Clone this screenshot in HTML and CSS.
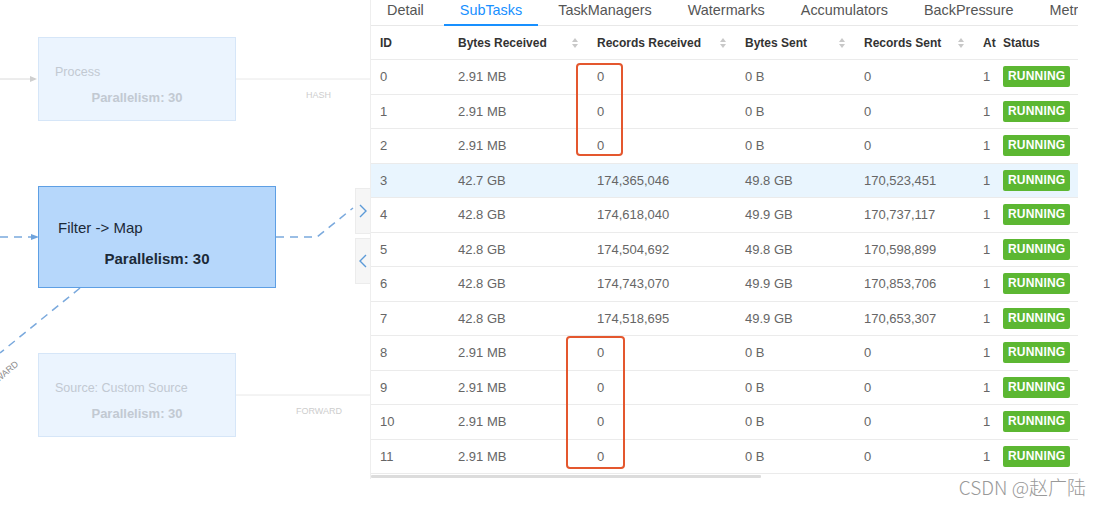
FILE: index.html
```html
<!DOCTYPE html>
<html>
<head>
<meta charset="utf-8">
<link rel="stylesheet" href="styles.css">
</head>
<body>
<div class="page">
  <div class="graph">
    <svg class="edges" width="370" height="505" viewBox="0 0 370 505">
      <line x1="0" y1="79" x2="30" y2="79" stroke="#dadada" stroke-width="1"/>
      <polygon points="30,76 37,79 30,82" fill="#cfcfcf"/>
      <line x1="236" y1="79" x2="370" y2="79" stroke="#e8e8e8" stroke-width="1"/>
      <text x="306" y="98" class="elabel">HASH</text>
      <line x1="0" y1="237" x2="31" y2="237" stroke="#7aa9dd" stroke-width="1.5" stroke-dasharray="8 6"/>
      <polygon points="31,234 39,237 31,240" fill="#6fa3dc"/>
      <path d="M276 237 L317 237 L353 208" fill="none" stroke="#7aa9dd" stroke-width="1.5" stroke-dasharray="8 6"/>
      <path d="M80 288 L0 353" fill="none" stroke="#7aa9dd" stroke-width="1.5" stroke-dasharray="8 6"/>
      <text x="19" y="365" class="elabel dark" text-anchor="end" transform="rotate(-40 19 365)">FORWARD</text>
      <line x1="236" y1="395" x2="370" y2="395" stroke="#e8e8e8" stroke-width="1"/>
      <text x="296" y="414" class="elabel">FORWARD</text>
    </svg>
    <div class="node faded n-process">
      <div class="ntitle">Process</div>
      <div class="npar">Parallelism: 30</div>
    </div>
    <div class="node active n-filter">
      <div class="ntitle">Filter -&gt; Map</div>
      <div class="npar">Parallelism: 30</div>
    </div>
    <div class="node faded n-source">
      <div class="ntitle">Source: Custom Source</div>
      <div class="npar">Parallelism: 30</div>
    </div>
    <div class="toggles">
      <div class="toggle"><svg width="8" height="14" viewBox="0 0 8 14"><path d="M1 1 L7 7 L1 13" fill="none" stroke="#5b9ad8" stroke-width="1.4"/></svg></div>
      <div class="toggle"><svg width="8" height="14" viewBox="0 0 8 14"><path d="M7 1 L1 7 L7 13" fill="none" stroke="#5b9ad8" stroke-width="1.4"/></svg></div>
    </div>
  </div>

  <div class="panel">
    <div class="tabs">
      <div class="tab">Detail</div>
      <div class="tab active">SubTasks</div>
      <div class="tab">TaskManagers</div>
      <div class="tab">Watermarks</div>
      <div class="tab">Accumulators</div>
      <div class="tab">BackPressure</div>
      <div class="tab">Metrics</div>
    </div>
    <div class="table">
      <div class="row head">
        <div class="c">ID</div>
        <div class="c sort">Bytes Received <span class="sorter"><i class="up"></i><i class="down"></i></span></div>
        <div class="c sort">Records Received <span class="sorter"><i class="up"></i><i class="down"></i></span></div>
        <div class="c sort">Bytes Sent <span class="sorter"><i class="up"></i><i class="down"></i></span></div>
        <div class="c sort">Records Sent <span class="sorter"><i class="up"></i><i class="down"></i></span></div>
        <div class="c">At</div>
        <div class="c">Status</div>
      </div>
      <div class="row"><div class="c">0</div><div class="c">2.91 MB</div><div class="c">0</div><div class="c">0 B</div><div class="c">0</div><div class="c">1</div><div class="c"><span class="badge">RUNNING</span></div></div>
      <div class="row"><div class="c">1</div><div class="c">2.91 MB</div><div class="c">0</div><div class="c">0 B</div><div class="c">0</div><div class="c">1</div><div class="c"><span class="badge">RUNNING</span></div></div>
      <div class="row"><div class="c">2</div><div class="c">2.91 MB</div><div class="c">0</div><div class="c">0 B</div><div class="c">0</div><div class="c">1</div><div class="c"><span class="badge">RUNNING</span></div></div>
      <div class="row hl"><div class="c">3</div><div class="c">42.7 GB</div><div class="c">174,365,046</div><div class="c">49.8 GB</div><div class="c">170,523,451</div><div class="c">1</div><div class="c"><span class="badge">RUNNING</span></div></div>
      <div class="row"><div class="c">4</div><div class="c">42.8 GB</div><div class="c">174,618,040</div><div class="c">49.9 GB</div><div class="c">170,737,117</div><div class="c">1</div><div class="c"><span class="badge">RUNNING</span></div></div>
      <div class="row"><div class="c">5</div><div class="c">42.8 GB</div><div class="c">174,504,692</div><div class="c">49.8 GB</div><div class="c">170,598,899</div><div class="c">1</div><div class="c"><span class="badge">RUNNING</span></div></div>
      <div class="row"><div class="c">6</div><div class="c">42.8 GB</div><div class="c">174,743,070</div><div class="c">49.9 GB</div><div class="c">170,853,706</div><div class="c">1</div><div class="c"><span class="badge">RUNNING</span></div></div>
      <div class="row"><div class="c">7</div><div class="c">42.8 GB</div><div class="c">174,518,695</div><div class="c">49.9 GB</div><div class="c">170,653,307</div><div class="c">1</div><div class="c"><span class="badge">RUNNING</span></div></div>
      <div class="row"><div class="c">8</div><div class="c">2.91 MB</div><div class="c">0</div><div class="c">0 B</div><div class="c">0</div><div class="c">1</div><div class="c"><span class="badge">RUNNING</span></div></div>
      <div class="row"><div class="c">9</div><div class="c">2.91 MB</div><div class="c">0</div><div class="c">0 B</div><div class="c">0</div><div class="c">1</div><div class="c"><span class="badge">RUNNING</span></div></div>
      <div class="row"><div class="c">10</div><div class="c">2.91 MB</div><div class="c">0</div><div class="c">0 B</div><div class="c">0</div><div class="c">1</div><div class="c"><span class="badge">RUNNING</span></div></div>
      <div class="row"><div class="c">11</div><div class="c">2.91 MB</div><div class="c">0</div><div class="c">0 B</div><div class="c">0</div><div class="c">1</div><div class="c"><span class="badge">RUNNING</span></div></div>
    </div>
    <div class="scrollbar"></div>
    <div class="mark mark1"></div>
    <div class="mark mark2"></div>
  </div>
  <div class="watermark">CSDN @赵广陆</div>
</div>
</body>
</html>
```
FILE: styles.css
```css
html, body {
  margin: 0;
  padding: 0;
  background: #fff;
}
body {
  width: 1100px;
  height: 505px;
  overflow: hidden;
  font-family: "Liberation Sans", Arial, sans-serif;
}
.page {
  position: relative;
  display: flex;
  width: 1100px;
  height: 505px;
}
.graph {
  position: relative;
  width: 370px;
  height: 505px;
  flex: none;
}
.edges {
  position: absolute;
  left: 0;
  top: 0;
}
.elabel {
  font-family: "Liberation Sans", Arial, sans-serif;
  font-size: 9px;
  fill: #cdcdcd;
}
.elabel.dark {
  fill: #8a8a8a;
}
.node {
  position: absolute;
  box-sizing: border-box;
  display: flex;
  flex-direction: column;
}
.node.faded {
  background: #ebf4fe;
  border: 1px solid #d6e6f8;
  color: #c2c9d2;
  width: 198px;
  height: 84px;
  padding: 26px 0 0 16px;
}
.node.faded .ntitle {
  font-size: 12.5px;
  line-height: 16px;
}
.node.faded .npar {
  font-size: 13px;
  font-weight: bold;
  line-height: 16px;
  margin-top: 10px;
  text-align: center;
  padding-right: 16px;
}
.n-process { left: 38px; top: 37px; }
.n-source { left: 38px; top: 353px; }
.node.active {
  left: 38px;
  top: 186px;
  width: 238px;
  height: 102px;
  background: #b6d7fb;
  border: 1.5px solid #5e9fe4;
  color: #1c2a38;
  padding: 32px 0 0 19px;
}
.node.active .ntitle {
  font-size: 15px;
  line-height: 18px;
}
.node.active .npar {
  font-size: 15px;
  font-weight: bold;
  line-height: 18px;
  margin-top: 13px;
  text-align: center;
  padding-right: 19px;
}
.toggles {
  position: absolute;
  left: 355px;
  top: 188px;
  display: flex;
  flex-direction: column;
  gap: 4px;
}
.toggle {
  width: 15px;
  height: 46px;
  box-sizing: border-box;
  background: #f6f6f6;
  border: 1px solid #ececec;
  border-right: none;
  display: flex;
  align-items: center;
  justify-content: center;
}

.panel {
  position: relative;
  width: 708px;
  flex: none;
  overflow: hidden;
  border-left: 1px solid #eeeeee;
  box-sizing: border-box;
  height: 479px;
}
.tabs {
  display: flex;
  height: 25px;
  border-bottom: 1px solid #e8e8e8;
  padding-left: 0;
  gap: 4px;
  white-space: nowrap;
}
.tab {
  position: relative;
  padding: 0 16px;
  font-size: 14.4px;
  color: #555;
  line-height: 20px;
  flex: none;
}
.tab.active {
  color: #1890ff;
}
.tab.active::after {
  content: "";
  position: absolute;
  left: 0;
  right: 0;
  bottom: -1px;
  height: 2px;
  background: #1890ff;
}
.table {
  display: flex;
  flex-direction: column;
}
.row {
  display: grid;
  grid-template-columns: 79px 139px 148px 119px 119px 20px 83px;
  height: 34.5px;
  box-sizing: border-box;
  border-bottom: 1px solid #ebebeb;
  align-items: center;
  font-size: 13px;
  color: #666;
}
.row.head {
  height: 34px;
  font-size: 12px;
  font-weight: bold;
  color: #333;
}
.row.hl {
  background: #e9f5fe;
}
.c {
  padding-left: 8px;
  white-space: nowrap;
}
.row .c:first-child {
  padding-left: 9px;
}
.c.sort {
  display: flex;
  justify-content: space-between;
  align-items: center;
  padding-right: 11px;
}
.sorter {
  display: flex;
  flex-direction: column;
  gap: 2px;
}
.sorter i {
  display: block;
  width: 0;
  height: 0;
  border-left: 3.5px solid transparent;
  border-right: 3.5px solid transparent;
}
.sorter .up { border-bottom: 4px solid #c8c8c8; }
.sorter .down { border-top: 4px solid #c8c8c8; }
.badge {
  display: inline-block;
  background: #5cb732;
  color: #fff;
  font-size: 12px;
  font-weight: bold;
  line-height: 21px;
  height: 21px;
  padding: 0 5px;
  border-radius: 2px;
  letter-spacing: 0.2px;
}
.scrollbar {
  width: 390px;
  height: 3px;
  margin-top: 1px;
  background: #dcdcdc;
  border-radius: 1px;
}
.mark {
  position: absolute;
  border: 2px solid #e4572e;
  border-radius: 4px;
  box-sizing: border-box;
}
.mark1 { left: 205px; top: 63px; width: 47px; height: 93px; }
.mark2 { left: 195px; top: 336px; width: 59px; height: 133px; }
.watermark {
  position: absolute;
  right: 14px;
  top: 473px;
  font-family: "Noto Sans CJK SC", "Noto Sans", sans-serif;
  font-size: 19px;
  color: #999;
  font-weight: 300;
}
```
